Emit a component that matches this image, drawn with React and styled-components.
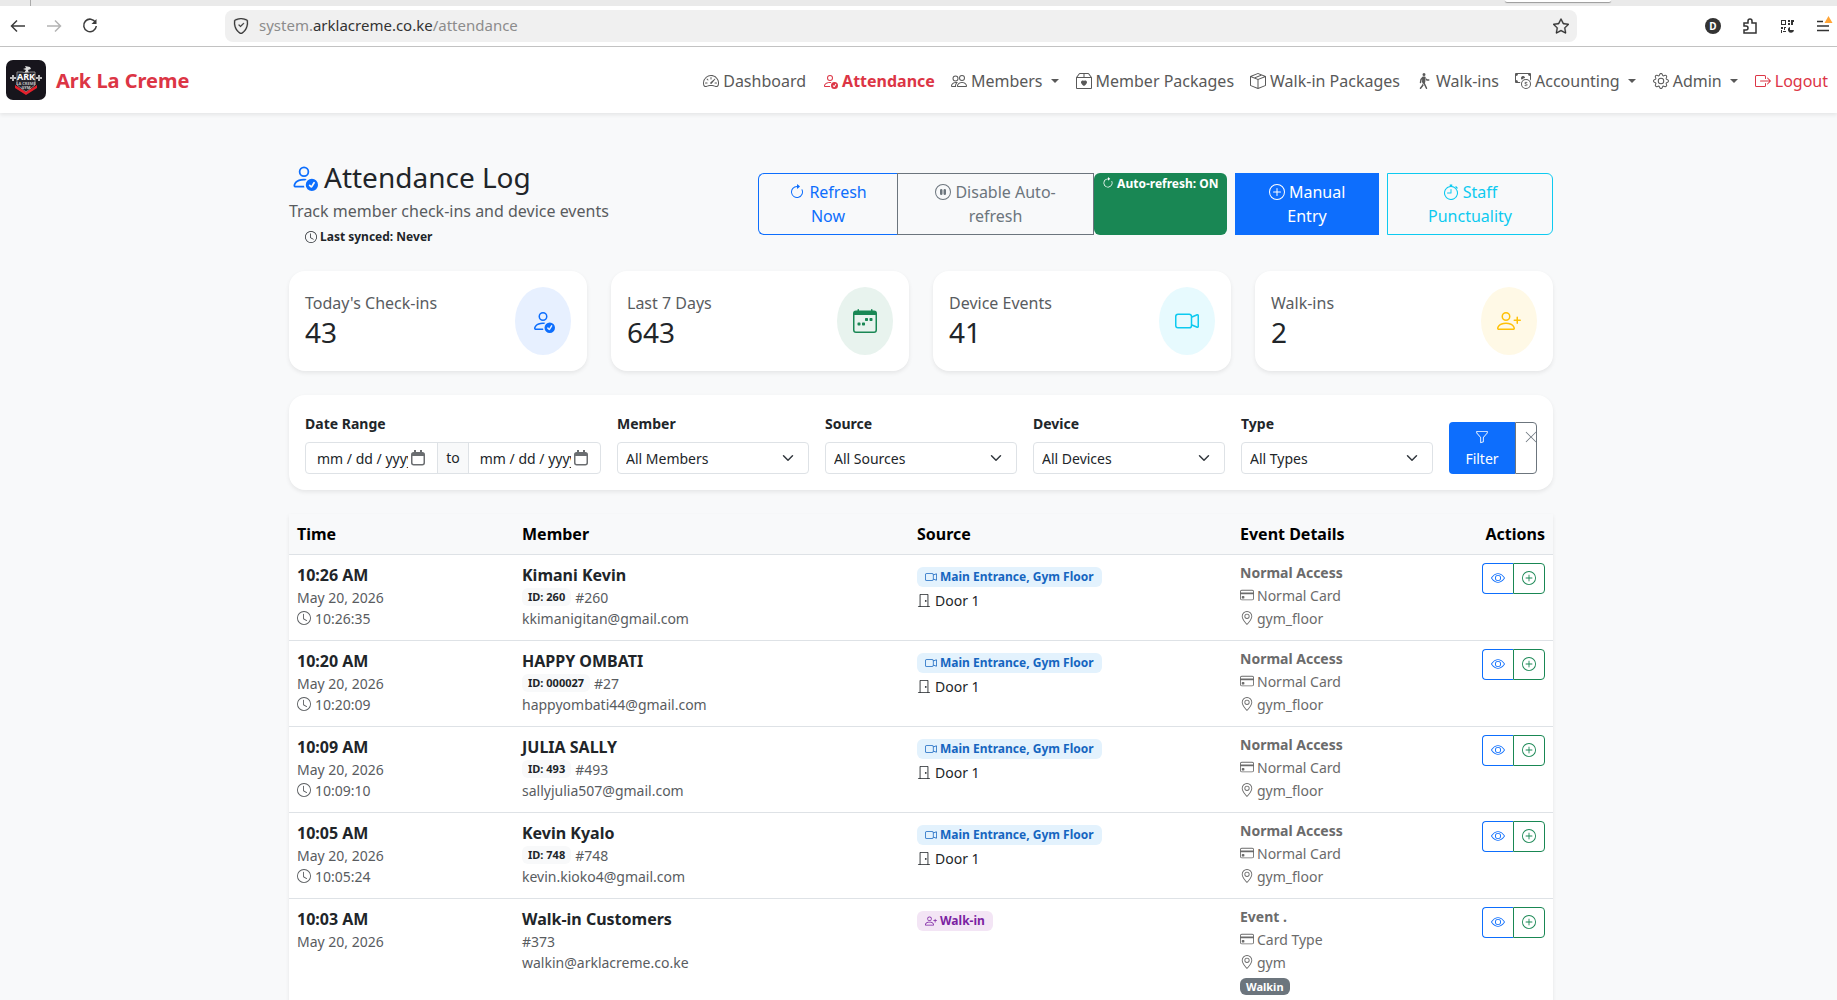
import styled, { createGlobalStyle } from "styled-components";
import {
  BsSpeedometer2,
  BsPersonCheck,
  BsPeople,
  BsBox2Heart,
  BsBoxSeam,
  BsPersonWalking,
  BsCashCoin,
  BsGear,
  BsBoxArrowRight,
  BsArrowClockwise,
  BsPauseCircle,
  BsPlusCircle,
  BsStopwatch,
  BsCalendarWeek,
  BsCameraVideo,
  BsPersonPlus,
  BsFunnel,
  BsXLg,
  BsClock,
  BsDoorClosed,
  BsCreditCard,
  BsGeoAlt,
  BsEye,
  BsShieldCheck,
  BsStar,
} from "react-icons/bs";

//#region -----> Global & palette

const GlobalStyle = createGlobalStyle`
  * {
    box-sizing: border-box;
  }

  body {
    margin: 0;
    background: #f8f9fa;
    color: #212529;
    font-family: "Noto Sans", sans-serif;
    font-size: 16px;
    line-height: 24px;
    overflow: hidden;
  }

  button, input, select {
    font-family: inherit;
  }

  h1, p {
    margin: 0;
    font-weight: 400;
  }
`;

const blue = "#0d6efd";
const green = "#198754";
const cyan = "#0dcaf0";
const yellow = "#ffc107";
const red = "#dc3545";
const gray = "#6c757d";

//#endregion

//#region -----> Browser bar

const TabStrip = styled.div`
  height: 6px;
  background: #eaeaea;
  display: flex;
  justify-content: space-between;
  padding: 0 226px 0 30px;

  span {
    width: 1px;
    background: #aaa;
  }

  i {
    width: 106px;
    height: 2px;
    background: #fff;
    border-radius: 0 0 6px 6px;
    box-shadow: 0 1px 1px #999;
  }
`;

const BrowserBar = styled.div`
  height: 41px;
  background: #fff;
  border-bottom: 1px solid #c4c4c4;
  display: flex;
  align-items: center;
  padding: 0 3px 0 8px;
`;

const NavButtons = styled.div`
  display: flex;
  gap: 16px;
  width: 217px;

  button {
    width: 20px;
    height: 20px;
    padding: 0;
    border: none;
    background: none;
    color: #3c3c3c;
  }

  button:disabled {
    color: #b4b4b4;
  }
`;

const AddressBar = styled.div`
  flex: 1;
  height: 32px;
  background: #f0f0f0;
  border-radius: 8px;
  display: flex;
  align-items: center;
  gap: 10px;
  padding: 0 8px;
  color: #8c8c8c;
  font-size: 15px;

  b {
    color: #333;
    font-weight: 400;
  }

  p {
    flex: 1;
    padding-bottom: 2px;
  }

  svg {
    color: #333;
    stroke: #333;
    stroke-width: 0.3px;
  }
`;

const BrowserTools = styled.div`
  width: 257px;
  display: flex;
  justify-content: flex-end;
  gap: 17px;
`;

//#endregion

//#region -----> Navbar

const Navbar = styled.nav`
  height: 66px;
  background: #fff;
  box-shadow: 0 2px 4px rgba(0, 0, 0, 0.08);
  display: flex;
  align-items: center;
  justify-content: space-between;
  padding: 0 9px 0 6px;
  position: relative;
`;

const Brand = styled.a`
  display: flex;
  align-items: center;
  gap: 10px;
  color: ${red};
  font-size: 20px;
  font-weight: 700;
  text-decoration: none;

  span {
    padding-top: 2px;
  }
`;

const NavLinks = styled.div`
  display: flex;
  gap: 16px;
  padding-top: 2px;
`;

const NavLink = styled.a`
  display: flex;
  align-items: center;
  white-space: nowrap;
  gap: 4px;
  color: ${(p) => p.$color || "#595959"};
  font-weight: ${(p) => (p.$active ? 700 : 400)};
  text-decoration: none;
`;

const Caret = styled.span`
  margin: 0 1px 0 4px;
  border-top: 4px solid currentColor;
  border-left: 4px solid transparent;
  border-right: 4px solid transparent;
`;

//#endregion

//#region -----> Page header

const Page = styled.main`
  max-width: 1269px;
  margin: 0 auto;
  padding: 48px 0 0 5px;
`;

const PageHeader = styled.header`
  display: flex;
  justify-content: space-between;
  align-items: center;
  margin-bottom: 24px;
`;

const Title = styled.h1`
  display: flex;
  align-items: center;
  gap: 6px;
  font-size: 28px;
  line-height: 32px;
  margin-bottom: 6px;

  svg {
    color: ${blue};
    margin-left: 1px;
  }
`;

const Subtitle = styled.p`
  color: #595c5f;
`;

const SyncBadge = styled.div`
  display: flex;
  align-items: center;
  width: fit-content;
  gap: 3px;
  margin-left: 8px;
  padding: 6px 8px 2px;
  border-radius: 6px;
  background: #f8f9fa;
  font-size: 12px;
  line-height: 16px;
  font-weight: 700;
`;

const Actions = styled.div`
  display: flex;
`;

const ActionButton = styled.button`
  width: ${(p) => p.$width}px;
  height: 62px;
  padding: 0 24px;
  margin-left: ${(p) => (p.$gap ? 8 : 0)}px;
  border: 1px solid ${(p) => p.$color};
  border-right-width: ${(p) => (p.$joined ? 0 : 1)}px;
  border-radius: ${(p) => p.$radius || "0"};
  background: ${(p) => (p.$solid ? p.$color : "transparent")};
  color: ${(p) => (p.$solid ? "#fff" : p.$color)};
  font-size: 16px;
  line-height: 24px;

  svg {
    vertical-align: -2px;
  }
`;

const AutoBadge = styled.span`
  width: 133px;
  padding: 2px 0 0 8px;
  border-radius: 6px;
  background: ${green};
  color: #fff;
  font-size: 12px;
  line-height: 18px;
  font-weight: 700;
  white-space: nowrap;

  svg {
    vertical-align: -1px;
  }
`;

//#endregion

//#region -----> Stats & filters

const Stats = styled.section`
  display: grid;
  grid-template-columns: repeat(4, 1fr);
  gap: 24px;
  margin-bottom: 24px;
`;

const Card = styled.div`
  background: #fff;
  border-radius: 16px;
  box-shadow: 0 2px 4px rgba(0, 0, 0, 0.08);
  padding: 16px;
`;

const StatCard = styled(Card)`
  display: flex;
  justify-content: space-between;
  align-items: center;
  color: #595c5f;

  strong {
    display: block;
    padding-bottom: 2px;
    color: #212529;
    font-size: 28px;
    line-height: 34px;
    font-weight: 400;
  }
`;

const StatIcon = styled.div`
  width: 56px;
  height: 68px;
  border-radius: 50%;
  display: grid;
  place-items: center;
  background: ${(p) => p.$bg};
  color: ${(p) => p.$color};
`;

const Filters = styled(Card)`
  display: grid;
  grid-template-columns: 296fr repeat(4, 192fr) 88px;
  column-gap: 16px;
  align-items: end;
  height: 95px;
  margin-bottom: 24px;
`;

const Field = styled.div`
  min-width: 0;

  label {
    display: block;
    margin-bottom: 8px;
    font-size: 14px;
    line-height: 21px;
    font-weight: 700;
  }
`;

const Select = styled.select`
  appearance: none;
  width: 100%;
  height: 32px;
  padding: 0 8px;
  border: 1px solid #dee2e6;
  border-radius: 4px;
  background: #fff
    url("data:image/svg+xml,%3csvg xmlns='http://www.w3.org/2000/svg' viewBox='0 0 16 16'%3e%3cpath fill='none' stroke='%23343a40' stroke-linecap='round' stroke-linejoin='round' stroke-width='2' d='m2 5 6 6 6-6'/%3e%3c/svg%3e")
    no-repeat right 14px center / 12px 12px;
  color: #212529;
  font-size: 14px;
`;

const DateGroup = styled.div`
  display: flex;
  height: 32px;
  border: 1px solid #dee2e6;
  border-radius: 4px;
  overflow: hidden;
  font-size: 14px;
  line-height: 30px;

  > span {
    padding: 0 8px;
    background: #f8f9fa;
    border: solid #dee2e6;
    border-width: 0 1px;
  }
`;

const DateBox = styled.div`
  flex: 1;
  min-width: 0;
  display: flex;
  align-items: center;
  gap: 3px;
  padding: 0 12px 0 11px;

  input {
    flex: 1;
    min-width: 0;
    padding: 0;
    border: none;
    outline: none;
    font-size: 14px;
    background: none;
  }

  input::placeholder {
    color: #212529;
    opacity: 1;
  }
`;

const FilterButtons = styled.div`
  display: flex;
  height: 52px;
`;

const FilterButton = styled.button`
  flex: 1;
  padding: 4px 8px;
  border: none;
  border-radius: 4px 0 0 4px;
  background: ${blue};
  color: #fff;
  font-size: 14px;
  line-height: 21px;

  svg {
    display: block;
    margin: 3px auto 4px;
  }
`;

const ClearButton = styled.button`
  width: 22px;
  padding: 7px 0 0 8px;
  border: 1px solid ${gray};
  border-radius: 0 4px 4px 0;
  background: #fff;
  color: ${gray};
  overflow: hidden;
  display: flex;
  align-items: flex-start;

  svg {
    flex: none;
  }
`;

//#endregion

//#region -----> Log table

const Table = styled.table`
  width: 100%;
  table-layout: fixed;
  border-collapse: collapse;
  background: #fff;
  box-shadow: 0 2px 4px rgba(0, 0, 0, 0.08);

  th {
    height: 40px;
    padding: 0 8px;
    text-align: left;
    color: #000;
    background: #f8f9fa;
  }

  tr {
    border-bottom: 1px solid #dee2e6;
  }

  td {
    padding: 8px;
    height: 86px;
    vertical-align: top;
  }

  th:last-child {
    text-align: right;
  }

  td.details {
    padding-top: 6px;
  }
`;

const TimeCol = styled.col`
  width: 225px;
`;

const MemberCol = styled.col`
  width: 395px;
`;

const SourceCol = styled.col`
  width: 323px;
`;

const DetailsCol = styled.col`
  width: 215px;
`;

const Name = styled.div`
  font-weight: 700;
`;

const Muted = styled.div`
  font-size: 14px;
  line-height: 21px;
  color: #595c5f;
  display: flex;
  align-items: center;
  gap: 4px;
`;

const Detail = styled(Muted)`
  line-height: 23px;
  gap: 3px;
  color: #6b6b6b;
  font-weight: ${(p) => (p.$bold ? 700 : 400)};
`;

const IdBadge = styled.b`
  padding: 0 6px;
  border-radius: 6px;
  background: #f8f9fa;
  color: #212529;
  font-size: 11px;
  line-height: 18px;
`;

const SourceBadge = styled.span`
  display: inline-flex;
  align-items: center;
  gap: 3px;
  margin-top: 4px;
  padding: 0 8px;
  border-radius: 6px;
  background: ${(p) => (p.$walkin ? "#f3e5f5" : "#e3f2fd")};
  color: ${(p) => (p.$walkin ? "#7b1fa2" : "#1565c0")};
  font-size: 12px;
  line-height: 20px;
  font-weight: 700;
  vertical-align: top;
`;

const Door = styled(Muted)`
  margin-top: 3px;
  color: #212529;
`;

const WalkinTag = styled.span`
  display: inline-block;
  margin-top: 4px;
  padding: 0 6px;
  border-radius: 6px;
  background: ${gray};
  color: #fff;
  font-size: 11px;
  line-height: 17px;
  font-weight: 700;
  vertical-align: top;
`;

const RowActions = styled.div`
  display: flex;
  justify-content: flex-end;

  button {
    width: 31px;
    height: 31px;
    padding: 0;
    display: grid;
    place-items: center;
    background: none;
    border: 1px solid ${blue};
    border-right: none;
    border-radius: 4px 0 0 4px;
    color: ${blue};
  }

  button:last-child {
    width: 32px;
    border: 1px solid ${green};
    border-radius: 0 4px 4px 0;
    color: ${green};
  }
`;

//#endregion

const navItems = [
  { label: "Dashboard", icon: BsSpeedometer2 },
  { label: "Attendance", icon: BsPersonCheck, active: true, color: red },
  { label: "Members", icon: BsPeople, menu: true },
  { label: "Member Packages", icon: BsBox2Heart },
  { label: "Walk-in Packages", icon: BsBoxSeam },
  { label: "Walk-ins", icon: BsPersonWalking },
  { label: "Accounting", icon: BsCashCoin, menu: true },
  { label: "Admin", icon: BsGear, menu: true },
  { label: "Logout", icon: BsBoxArrowRight, color: red },
];

const stats = [
  { label: "Today's Check-ins", value: 43, icon: BsPersonCheck, color: blue, bg: "#e7f0ff" },
  { label: "Last 7 Days", value: 643, icon: BsCalendarWeek, color: green, bg: "#e8f3ee" },
  { label: "Device Events", value: 41, icon: BsCameraVideo, color: cyan, bg: "#e7fafe" },
  { label: "Walk-ins", value: 2, icon: BsPersonPlus, color: yellow, bg: "#fff9e6" },
];

const selects = [
  { id: "member", label: "Member", value: "All Members" },
  { id: "source", label: "Source", value: "All Sources" },
  { id: "device", label: "Device", value: "All Devices" },
  { id: "type", label: "Type", value: "All Types" },
];

const rows = [
  { time: "10:26 AM", clock: "10:26:35", name: "Kimani Kevin", badge: "260", num: "#260", email: "kkimanigitan@gmail.com" },
  { time: "10:20 AM", clock: "10:20:09", name: "HAPPY OMBATI", badge: "000027", num: "#27", email: "happyombati44@gmail.com" },
  { time: "10:09 AM", clock: "10:09:10", name: "JULIA SALLY", badge: "493", num: "#493", email: "sallyjulia507@gmail.com" },
  { time: "10:05 AM", clock: "10:05:24", name: "Kevin Kyalo", badge: "748", num: "#748", email: "kevin.kioko4@gmail.com" },
  { time: "10:03 AM", name: "Walk-in Customers", num: "#373", email: "walkin@arklacreme.co.ke", walkin: true },
];

const Logo = () => (
  <svg width="40" height="40" viewBox="0 0 40 40">
    <rect width="40" height="40" rx="7" fill="#17151c" />
    <path d="M19 6l5 1 1 2-3 1 1 3h-5l2-3-3-1 3-1z" fill="#ddd" />
    <path d="M11 12h5l4 1 4-1h5v13l-9 7-9-7z" fill="#26242b" stroke="#888" />
    <path d="M4 18h6m20 0h6M7 15v6m26-6v6" stroke="#bbb" strokeWidth="2" />
    <text x="20" y="20" textAnchor="middle" fontSize="9" fontWeight="700" fill="#fff">ARK</text>
    <text x="20" y="25" textAnchor="middle" fontSize="4" fill="#bbb">LA CREME</text>
    <text x="20" y="29" textAnchor="middle" fontSize="4" fill="#ccc">GYM</text>
    <path d="M9 25l11 7 11-7v3l-11 7-11-7z" fill="#e5202b" />
  </svg>
);

const Arrow = ({ back }) => (
  <svg width="20" height="20" viewBox="0 0 20 20" fill="none" stroke="currentColor" strokeWidth="1.5">
    <path d={back ? "M17 10H4M9 4.5L3.5 10L9 15.5" : "M3 10h13M11 4.5L16.5 10L11 15.5"} />
  </svg>
);

const Reload = () => (
  <svg width="20" height="20" viewBox="0 0 20 20" fill="none" stroke="currentColor" strokeWidth="1.5">
    <path d="M15.6 6.5A6.3 6.3 0 1 0 16.3 10" />
    <path d="M16.5 3v5h-5z" fill="currentColor" stroke="none" />
  </svg>
);

const CalendarGlyph = () => (
  <svg width="14" height="16" viewBox="0 0 14 16">
    <rect x="0.75" y="2.75" width="12.5" height="12" rx="2" fill="none" stroke="#6a6d70" strokeWidth="1.5" />
    <path d="M1 3h12v3H1zM3 0h2v3H3zM9 0h2v3H9z" fill="#6a6d70" />
  </svg>
);

const LogRow = ({ row }) => (
  <tr>
    <td>
      <Name>{row.time}</Name>
      <Muted>May 20, 2026</Muted>
      {row.clock && (
        <Muted>
          <BsClock size={14} />
          {row.clock}
        </Muted>
      )}
    </td>
    <td>
      <Name>{row.name}</Name>
      <Muted>
        {row.badge && <IdBadge>ID: {row.badge}</IdBadge>}
        {row.num}
      </Muted>
      <Muted>{row.email}</Muted>
    </td>
    <td>
      <SourceBadge $walkin={row.walkin}>
        {row.walkin ? <BsPersonPlus size={12} /> : <BsCameraVideo size={12} />}
        {row.walkin ? "Walk-in" : "Main Entrance, Gym Floor"}
      </SourceBadge>
      {!row.walkin && (
        <Door>
          <BsDoorClosed size={14} />
          Door 1
        </Door>
      )}
    </td>
    <td className="details">
      <Detail $bold>{row.walkin ? "Event ." : "Normal Access"}</Detail>
      <Detail>
        <BsCreditCard size={14} />
        {row.walkin ? "Card Type" : "Normal Card"}
      </Detail>
      <Detail>
        <BsGeoAlt size={14} />
        {row.walkin ? "gym" : "gym_floor"}
      </Detail>
      {row.walkin && <WalkinTag>Walkin</WalkinTag>}
    </td>
    <td>
      <RowActions>
        <button aria-label="View">
          <BsEye size={14} />
        </button>
        <button aria-label="Add">
          <BsPlusCircle size={14} />
        </button>
      </RowActions>
    </td>
  </tr>
);

export default function App() {
  return (
    <>
      <GlobalStyle />
      <TabStrip>
        <span />
        <i />
      </TabStrip>
      <BrowserBar>
        <NavButtons>
          <button aria-label="Back"><Arrow back /></button>
          <button aria-label="Forward" disabled><Arrow /></button>
          <button aria-label="Reload"><Reload /></button>
        </NavButtons>
        <AddressBar>
          <BsShieldCheck size={16} />
          <p>system.<b>arklacreme.co.ke</b>/attendance</p>
          <BsStar size={16} />
        </AddressBar>
        <BrowserTools>
          <svg width="20" height="20" viewBox="0 0 20 20">
            <circle cx="10" cy="10" r="8" fill="#333" />
            <text x="10" y="14" textAnchor="middle" fontSize="10" fontWeight="700" fill="#fff">D</text>
          </svg>
          <svg width="20" height="20" viewBox="0 0 20 20" fill="none" stroke="#333" strokeWidth="1.5">
            <path d="M4 7h4V5a2 2 0 0 1 4 0v2h4v10H4v-3h2a2 2 0 0 0 0-4H4z" />
          </svg>
          <svg width="20" height="20" viewBox="0 0 20 20" fill="#333">
            <path d="M4 4h5v5H4zm1 1v3h3V5zM11 4h2v2h-2zM14 4h3v2h-1v3h-2zM11 7h2v2h-2zM4 11h2v2H4zM7 11h2v1H8v2H7zM4 14h1v3H4zM6 15h3v1H6z" />
            <path d="M13 11v3h4a3 3 0 1 1-4-3z" />
          </svg>
          <svg width="20" height="20" viewBox="0 0 20 20">
            <path d="M3 5.500h6M3 10h12M3 14.500h12" stroke="#333" strokeWidth="1.5" />
            <path d="M14.500 0l4 7h-8z" fill="#ffa436" />
          </svg>
        </BrowserTools>
      </BrowserBar>

      <Navbar>
        <Brand href="#">
          <Logo />
          <span>Ark La Creme</span>
        </Brand>
        <NavLinks>
          {navItems.map(({ label, icon: Icon, active, color, menu }) => (
            <NavLink key={label} href="#" $active={active} $color={color}>
              <Icon size={16} />
              {label}
              {menu && <Caret />}
            </NavLink>
          ))}
        </NavLinks>
      </Navbar>

      <Page>
        <PageHeader>
          <div>
            <Title>
              <BsPersonCheck size={28} />
              Attendance Log
            </Title>
            <Subtitle>Track member check-ins and device events</Subtitle>
            <SyncBadge>
              <BsClock size={12} />
              Last synced: Never
            </SyncBadge>
          </div>
          <Actions>
            <ActionButton $width={139} $color={blue} $joined $radius="6px 0 0 6px">
              <BsArrowClockwise /> Refresh Now
            </ActionButton>
            <ActionButton $width={197} $color={gray}>
              <BsPauseCircle /> Disable Auto-refresh
            </ActionButton>
            <AutoBadge>
              <BsArrowClockwise /> Auto-refresh: ON
            </AutoBadge>
            <ActionButton $width={144} $color={blue} $solid $gap>
              <BsPlusCircle /> Manual Entry
            </ActionButton>
            <ActionButton $width={166} $color={cyan} $gap $radius="0 6px 6px 0">
              <BsStopwatch /> Staff Punctuality
            </ActionButton>
          </Actions>
        </PageHeader>

        <Stats>
          {stats.map(({ label, value, icon: Icon, color, bg }) => (
            <StatCard key={label}>
              <div>
                {label}
                <strong>{value}</strong>
              </div>
              <StatIcon $color={color} $bg={bg}>
                <Icon size={24} />
              </StatIcon>
            </StatCard>
          ))}
        </Stats>

        <Filters>
          <Field>
            <label htmlFor="from">Date Range</label>
            <DateGroup>
              <DateBox>
                <input id="from" placeholder="mm / dd / yyyy" />
                <CalendarGlyph />
              </DateBox>
              <span>to</span>
              <DateBox>
                <input aria-label="End date" placeholder="mm / dd / yyyy" />
                <CalendarGlyph />
              </DateBox>
            </DateGroup>
          </Field>
          {selects.map((s) => (
            <Field key={s.id}>
              <label htmlFor={s.id}>{s.label}</label>
              <Select id={s.id}>
                <option>{s.value}</option>
              </Select>
            </Field>
          ))}
          <FilterButtons>
            <FilterButton>
              <BsFunnel size={14} />
              Filter
            </FilterButton>
            <ClearButton aria-label="Clear">
              <BsXLg size={14} />
            </ClearButton>
          </FilterButtons>
        </Filters>

        <Table>
          <colgroup>
            <TimeCol />
            <MemberCol />
            <SourceCol />
            <DetailsCol />
            <col />
          </colgroup>
          <thead>
            <tr>
              <th>Time</th>
              <th>Member</th>
              <th>Source</th>
              <th>Event Details</th>
              <th>Actions</th>
            </tr>
          </thead>
          <tbody>
            {rows.map((row) => (
              <LogRow key={row.time} row={row} />
            ))}
          </tbody>
        </Table>
      </Page>
    </>
  );
}
